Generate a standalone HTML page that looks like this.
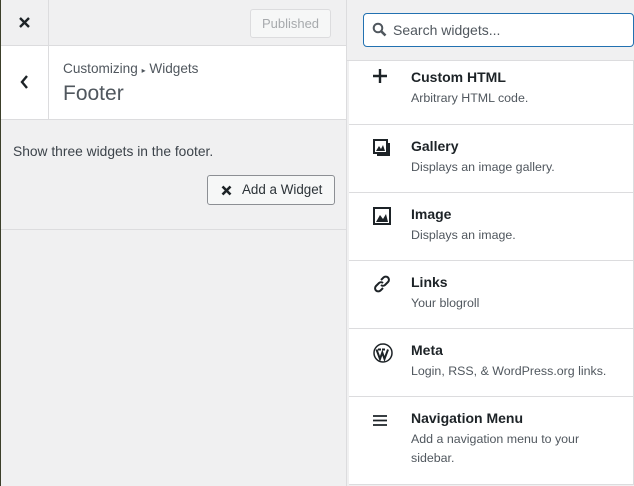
<!DOCTYPE html>
<html><head><style>
*{box-sizing:border-box;margin:0;padding:0}
body{width:634px;height:486px;overflow:hidden;background:#f0f0f1;font-family:"Liberation Sans",sans-serif;color:#1d2327;position:relative}
.abs{position:absolute}
.left{left:0;top:0;width:346px;height:486px;background:#f0f0f1;border-left:1px solid #3c3f2a}
.right{left:346px;top:0;width:288px;height:486px;background:#f0f0f1;border-left:1px solid #dcdcde}
.item{position:absolute;left:2px;width:285px;background:#fff;border-bottom:1px solid #dcdcde;border-right:1px solid #dcdcde}
.item .t{position:absolute;left:62px;top:13px;font-size:14px;font-weight:bold;color:#1d2327}
.item .d{position:absolute;left:62px;top:33px;font-size:12.4px;color:#50575e;line-height:19px;width:205px}
.item svg{position:absolute;left:24px;top:14px}
</style></head><body>
<div class="abs left">
  <div class="abs" style="left:0;top:0;width:346px;height:46px;border-bottom:1px solid #dcdcde"></div>
  <div class="abs" style="left:47px;top:0;width:1px;height:46px;background:#dcdcde"></div>
  <svg class="abs" style="left:17px;top:16px" width="13" height="13" viewBox="0 0 13 13"><path d="M2 2L11 11M11 2L2 11" stroke="#1d2327" stroke-width="2.4"/></svg>
  <div class="abs" style="left:249px;top:9px;width:81px;height:29px;border:1px solid #dcdcde;border-radius:3px;background:#f6f7f7;color:#a7aaad;font-size:13px;text-align:center;line-height:27px">Published</div>
  <div class="abs" style="left:0;top:46px;width:346px;height:74px;background:#fff;border-bottom:1px solid #dcdcde"></div>
  <div class="abs" style="left:47px;top:46px;width:1px;height:73px;background:#dcdcde"></div>
  <svg class="abs" style="left:19px;top:75px" width="9" height="14" viewBox="0 0 9 14"><path d="M7 1L2 7L7 13" stroke="#1d2327" stroke-width="2.4" fill="none"/></svg>
  <div class="abs" style="left:62px;top:61px;font-size:13.6px;color:#50575e">Customizing <span style="font-size:8px">▸</span> Widgets</div>
  <div class="abs" style="left:62px;top:82px;font-size:21px;color:#50575e">Footer</div>
  <div class="abs" style="left:12px;top:144px;font-size:13.8px;color:#3c434a">Show three widgets in the footer.</div>
  <div class="abs" style="left:206px;top:175px;width:128px;height:30px;border:1px solid #8c8f94;border-radius:3px;background:#f6f7f7;font-size:13.4px;color:#2c3338;line-height:28px;padding-left:34px">Add a Widget</div>
  <svg class="abs" style="left:220px;top:185px" width="11" height="11" viewBox="0 0 11 11"><path d="M1.5 1.5L9.5 9.5M9.5 1.5L1.5 9.5" stroke="#1d2327" stroke-width="2.6"/></svg>
  <div class="abs" style="left:0;top:229px;width:346px;height:1px;background:#dcdcde"></div>
</div>
<div class="abs right">
  <div class="abs" style="left:16px;top:13px;width:271px;height:34px;border:1.5px solid #2271b1;border-radius:4px;background:#fff"></div>
  <svg class="abs" style="left:25px;top:22px" width="15" height="15" viewBox="0 0 15 15"><circle cx="6" cy="6" r="4.3" stroke="#50575e" stroke-width="2" fill="none"/><path d="M9 9L13.5 13.5" stroke="#50575e" stroke-width="2.6"/></svg>
  <div class="abs" style="left:46px;top:22px;font-size:14px;color:#50575e">Search widgets...</div>
  <div class="abs" style="left:0;top:60px;width:288px;height:1px;background:#dcdcde"></div>
  <div class="item" style="top:61px;height:64px"><svg style="top:8px" width="14" height="14" viewBox="0 0 14 14"><path d="M7 0V14M0 7H14" stroke="#1d2327" stroke-width="2.4"/></svg><div class="t" style="top:8px">Custom HTML</div><div class="d" style="top:28px">Arbitrary HTML code.</div></div>
  <div class="item" style="top:125px;height:68px"><svg width="18" height="18" viewBox="0 0 18 18"><rect x="1" y="1" width="13" height="13" fill="none" stroke="#1d2327" stroke-width="2"/><path d="M16 4V16H4" fill="none" stroke="#1d2327" stroke-width="2"/><path d="M3 12L6 7L8 10L10 6L12 12Z" fill="#1d2327"/></svg><div class="t">Gallery</div><div class="d">Displays an image gallery.</div></div>
  <div class="item" style="top:193px;height:68px"><svg width="18" height="18" viewBox="0 0 18 18"><rect x="1" y="1" width="16" height="16" fill="none" stroke="#1d2327" stroke-width="2"/><path d="M3 15L7 8L10 12L13 7L15 15Z" fill="#1d2327"/></svg><div class="t">Image</div><div class="d">Displays an image.</div></div>
  <div class="item" style="top:261px;height:68px"><svg width="18" height="18" viewBox="0 0 18 18"><path d="M8 5L10.5 2.5a3 3 0 0 1 4.5 4.5L12 10a3 3 0 0 1-4 0M10 13L7.5 15.5a3 3 0 0 1-4.5-4.5L6 8a3 3 0 0 1 4 0" fill="none" stroke="#1d2327" stroke-width="2"/></svg><div class="t">Links</div><div class="d">Your blogroll</div></div>
  <div class="item" style="top:329px;height:68px"><svg width="20" height="20" viewBox="0 0 20 20"><circle cx="10" cy="10" r="9" fill="none" stroke="#1d2327" stroke-width="1.5"/><path d="M3.5 6.5L7 16L9.3 9.5L11.5 16L15 6.5M5 6.5H8M9 6.5H12" fill="none" stroke="#1d2327" stroke-width="2"/></svg><div class="t">Meta</div><div class="d">Login, RSS, &amp; WordPress.org links.</div></div>
  <div class="item" style="top:397px;height:88px"><svg style="top:16px" width="14" height="14" viewBox="0 0 14 14"><path d="M0 3H14M0 7.5H14M0 12H14" stroke="#1d2327" stroke-width="1.8"/></svg><div class="t">Navigation Menu</div><div class="d" style="width:190px">Add a navigation menu to your sidebar.</div></div>
</div>
</body></html>
